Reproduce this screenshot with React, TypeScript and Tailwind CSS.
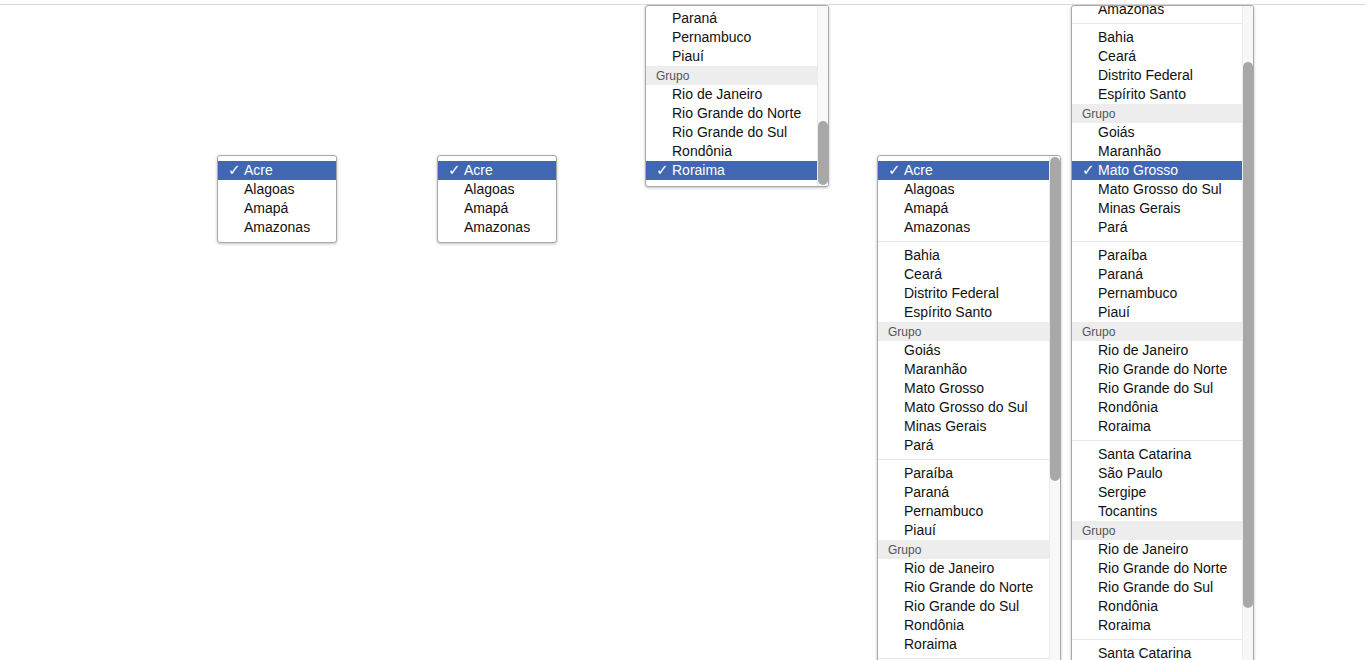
import React from "react";

type Entry =
  | { kind: "item"; label: string }
  | { kind: "sep" }
  | { kind: "group"; label: string };

const it = (label: string): Entry => ({ kind: "item", label });
const sep: Entry = { kind: "sep" };
const grp: Entry = { kind: "group", label: "Grupo" };

const fullList: Entry[] = [
  it("Acre"),
  it("Alagoas"),
  it("Amapá"),
  it("Amazonas"),
  sep,
  it("Bahia"),
  it("Ceará"),
  it("Distrito Federal"),
  it("Espírito Santo"),
  grp,
  it("Goiás"),
  it("Maranhão"),
  it("Mato Grosso"),
  it("Mato Grosso do Sul"),
  it("Minas Gerais"),
  it("Pará"),
  sep,
  it("Paraíba"),
  it("Paraná"),
  it("Pernambuco"),
  it("Piauí"),
  grp,
  it("Rio de Janeiro"),
  it("Rio Grande do Norte"),
  it("Rio Grande do Sul"),
  it("Rondônia"),
  it("Roraima"),
  sep,
  it("Santa Catarina"),
  it("São Paulo"),
  it("Sergipe"),
  it("Tocantins"),
  grp,
  it("Rio de Janeiro"),
  it("Rio Grande do Norte"),
  it("Rio Grande do Sul"),
  it("Rondônia"),
  it("Roraima"),
  sep,
  it("Santa Catarina"),
  it("São Paulo"),
  it("Sergipe"),
  it("Tocantins"),
];

const shortList: Entry[] = [it("Acre"), it("Alagoas"), it("Amapá"), it("Amazonas")];

// list that ends at the first Roraima
const toRoraima = fullList.slice(0, 27);

interface MenuProps {
  entries: Entry[];
  selected: number;
  className: string;
  scroll?: string;
  thumb?: string;
}

// popup list of a select, drawn open over the page
const Menu: React.FC<MenuProps> = ({ entries, selected, className, scroll, thumb }) => {
  return (
    <div
      className={`absolute overflow-hidden rounded-[3px] border border-[#a9a9a9] bg-white shadow-[0_1px_3px_rgba(0,0,0,0.25)] ${className}`}
    >
      <div className={`flex flex-col py-[5px] ${scroll ?? ""} ${thumb ? "pr-[11px]" : ""}`}>
        {entries.map((e, i) => {
          if (e.kind === "sep") {
            return <div key={i} className="my-[4px] h-px bg-[#e6e6e6]" />;
          }
          if (e.kind === "group") {
            return (
              <div
                key={i}
                className="flex h-[19px] items-center bg-[#ededed] pl-[10px] text-[12px] text-[#555]"
              >
                {e.label}
              </div>
            );
          }
          const active = i === selected;
          return (
            <div
              key={i}
              className={`flex h-[19px] items-center whitespace-nowrap pl-[10px] text-[14px] ${
                active ? "bg-[#4267b2] text-white" : "text-[#111]"
              }`}
            >
              <span
                className="w-[16px] text-[15px] leading-none"
                style={{ fontFamily: '"DejaVu Sans", sans-serif' }}
              >
                {active ? "✓" : ""}
              </span>
              {e.label}
            </div>
          );
        })}
      </div>
      {thumb && (
        <div className="absolute top-0 right-0 bottom-0 w-[11px] border-l border-[#ececec] bg-[#f8f8f8]">
          <div className={`absolute left-0 w-[10px] rounded-full bg-[#a8a8a8] ${thumb}`} />
        </div>
      )}
    </div>
  );
};

export default function App() {
  return (
    <div
      className="relative h-[660px] w-[1366px] overflow-hidden bg-white"
      style={{ fontFamily: '"Liberation Sans", Arial, sans-serif' }}
    >
      <div className="h-[5px] border-b border-[#dcdcdc]" />

      <Menu entries={shortList} selected={0} className="left-[217px] top-[155px] w-[120px]" />
      <Menu entries={shortList} selected={0} className="left-[437px] top-[155px] w-[120px]" />
      <Menu
        entries={toRoraima}
        selected={26}
        className="left-[645px] top-[5px] h-[182px] w-[184px]"
        scroll="-mt-[324px]"
        thumb="top-[115px] h-[64px]"
      />
      <Menu
        entries={fullList}
        selected={0}
        className="left-[877px] top-[155px] h-[600px] w-[184px]"
        thumb="top-[1px] h-[324px]"
      />
      <Menu
        entries={fullList}
        selected={12}
        className="left-[1071px] top-[5px] h-[700px] w-[183px]"
        scroll="-mt-[68px]"
        thumb="top-[56px] h-[546px]"
      />
    </div>
  );
}
